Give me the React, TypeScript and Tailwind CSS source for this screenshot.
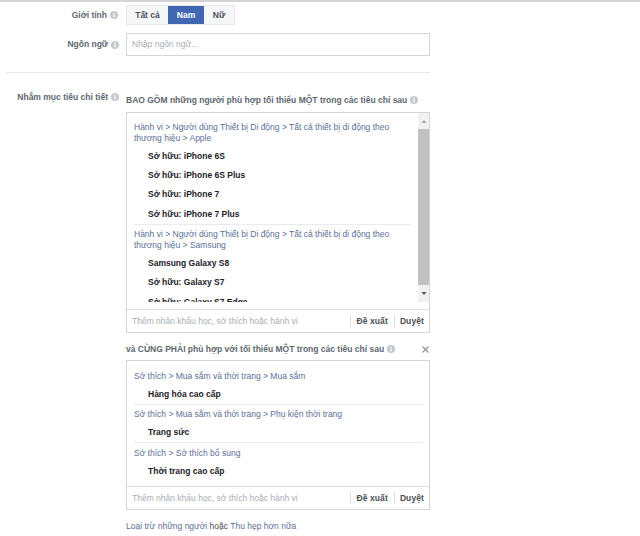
const font = { fontFamily: '"Liberation Sans", Arial, sans-serif' };

function Info() {
  return (
    <svg width="8" height="8" viewBox="0 0 12 12" className="inline-block shrink-0">
      <circle cx="6" cy="6" r="6" fill="#c4c8cf" />
      <rect x="5" y="5" width="2" height="4.5" fill="#fff" />
      <rect x="5" y="2.5" width="2" height="1.7" fill="#fff" />
    </svg>
  );
}

function Path({ children }: { children: React.ReactNode }) {
  return <div className="whitespace-nowrap text-[8.5px] leading-[11px] text-[#5d6f97]">{children}</div>;
}

function Item({ children }: { children: React.ReactNode }) {
  return <div className="h-[19.2px] whitespace-nowrap pl-[14px] text-[8.5px] leading-[19px] font-bold text-[#1d2129]">{children}</div>;
}

function Footer() {
  return (
    <div className="flex h-[23px] items-center border-t border-[#dddfe2] pl-[5px] pr-[5px] text-[8.5px]">
      <span className="flex-1 whitespace-nowrap text-[#a9adb5]">Thêm nhân khẩu học, sở thích hoặc hành vi</span>
      <span className="whitespace-nowrap border-l border-[#dddfe2] pl-[5px] font-bold tracking-[0.1px] text-[#4b4f56]">Đề xuất</span>
      <span className="ml-[6px] whitespace-nowrap border-l border-[#dddfe2] pl-[5px] font-bold tracking-[0.1px] text-[#4b4f56]">Duyệt</span>
    </div>
  );
}

export default function App() {
  return (
    <div style={font} className="h-[536px] w-[640px] overflow-hidden bg-white">
      <div className="h-[2px] bg-[#d3d3d3]" />

      <div className="mt-[3px] flex">
        <div className="flex h-[20px] w-[126px] items-center justify-end gap-[3px] pr-[8px] text-[8.5px] font-bold text-[#606770]">
          Giới tính <Info />
        </div>
        <div className="flex h-[20px] border border-[#e4e6ea] bg-[#f6f7f9] text-[8.5px] font-bold text-[#4b4f56]">
          <span className="flex w-[41px] items-center justify-center">Tất cả</span>
          <span className="flex w-[36px] items-center justify-center bg-[#4267b2] text-white">Nam</span>
          <span className="flex w-[30px] items-center justify-center">Nữ</span>
        </div>
      </div>

      <div className="mt-[8px] flex">
        <div className="flex h-[23px] w-[126px] items-center justify-end gap-[3px] pr-[7px] text-[8.5px] font-bold text-[#606770]">
          Ngôn ngữ <Info />
        </div>
        <div className="flex h-[23px] w-[304px] items-center border border-[#d3d6db] pl-[5px] text-[8.5px] text-[#a9adb5]">
          Nhập ngôn ngữ...
        </div>
      </div>

      <div className="ml-[6px] mt-[16px] h-px w-[424px] bg-[#e4e6ea]" />

      <div className="mt-[18px] flex">
        <div className="flex h-[12px] w-[126px] items-center justify-end gap-[3px] pr-[7px] text-[8.5px] font-bold text-[#606770]">
          Nhắm mục tiêu chi tiết <Info />
        </div>
        <div className="w-[304px]">
          <div className="flex h-[15px] items-center gap-[3px] whitespace-nowrap pt-[3px] text-[8.5px] font-bold text-[#606770]">
            BAO GỒM những người phù hợp tối thiểu MỘT trong các tiêu chí sau <Info />
          </div>

          <div className="mt-[6px] border border-[#d3d6db]">
            <div className="relative h-[189px] overflow-hidden pl-[7px] pr-[12px] pt-[8.5px]">
              <Path>Hành vi &gt; Người dùng Thiết bị Di động &gt; Tất cả thiết bị di động theo<br />thương hiệu &gt; Apple</Path>
              <div className="mt-[3.5px]">
                <Item>Sở hữu: iPhone 6S</Item>
                <Item>Sở hữu: iPhone 6S Plus</Item>
                <Item>Sở hữu: iPhone 7</Item>
                <Item>Sở hữu: iPhone 7 Plus</Item>
              </div>
              <div className="mb-[4px] mr-[6px] h-px bg-[#e9ebee]" />
              <Path>Hành vi &gt; Người dùng Thiết bị Di động &gt; Tất cả thiết bị di động theo<br />thương hiệu &gt; Samsung</Path>
              <div className="mt-[3.5px]">
                <Item>Samsung Galaxy S8</Item>
                <Item>Sở hữu: Galaxy S7</Item>
                <Item>Sở hữu: Galaxy S7 Edge</Item>
              </div>
              {/* scrollbar */}
              <div className="absolute bottom-0 right-0 top-0 flex w-[11px] flex-col items-center bg-[#f1f1f1]">
                <svg width="6" height="16" viewBox="0 0 6 16" className="shrink-0"><path d="M0.5 10 L3 7 L5.5 10 Z" fill="#a3a3a3" /></svg>
                <div className="h-[156px] w-full bg-[#c1c1c1]" />
                <svg width="6" height="16" viewBox="0 0 6 16" className="mt-auto shrink-0"><path d="M0.5 6 L3 9 L5.5 6 Z" fill="#505050" /></svg>
              </div>
            </div>
            <div className="mt-[7px]"><Footer /></div>
          </div>

          <div className="mt-[8px] flex h-[16px] items-center gap-[3px] whitespace-nowrap text-[8.5px] font-bold text-[#606770]">
            và CÙNG PHẢI phù hợp với tối thiểu MỘT trong các tiêu chí sau <Info />
            <svg width="7" height="7" viewBox="0 0 7 7" className="ml-auto mr-[1px]"><path d="M0.5 0.5 L6.5 6.5 M6.5 0.5 L0.5 6.5" stroke="#90949c" strokeWidth="1.1" /></svg>
          </div>

          <div className="mt-[3px] border border-[#d3d6db]">
            <div className="px-[7px] pb-[5px] pt-[9.5px]">
              <Path>Sở thích &gt; Mua sắm và thời trang &gt; Mua sắm</Path>
              <div className="mt-[3px]"><Item>Hàng hóa cao cấp</Item></div>
              <div className="mb-[4.5px] h-px bg-[#e9ebee]" />
              <Path>Sở thích &gt; Mua sắm và thời trang &gt; Phụ kiện thời trang</Path>
              <div className="mt-[3px]"><Item>Trang sức</Item></div>
              <div className="mb-[4.5px] h-px bg-[#e9ebee]" />
              <Path>Sở thích &gt; Sở thích bổ sung</Path>
              <div className="mt-[3px]"><Item>Thời trang cao cấp</Item></div>
            </div>
            <Footer />
          </div>

          <div className="mt-[10px] text-[8.5px] leading-[12px] text-[#5d6f97]">
            Loại trừ những người <span className="text-[#4b4f56]">hoặc</span> Thu hẹp hơn nữa
          </div>
        </div>
      </div>
    </div>
  );
}
